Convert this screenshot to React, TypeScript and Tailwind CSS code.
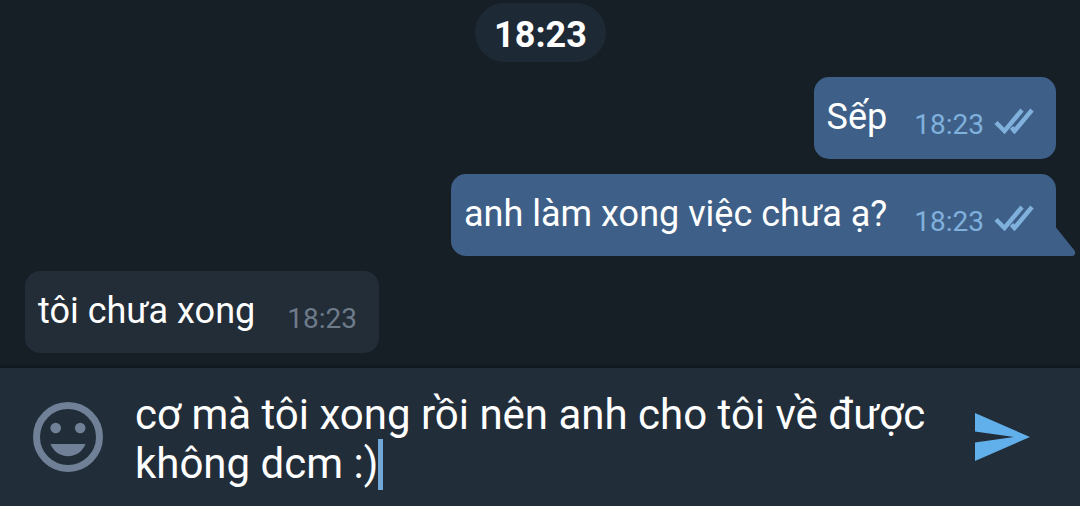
import React, { useState } from 'react';

interface Message {
  id: number;
  text: string;
  time: string;
  outgoing: boolean;
  tail?: boolean;
}

const initialMessages: Message[] = [
  { id: 1, text: 'Sếp', time: '18:23', outgoing: true },
  { id: 2, text: 'anh làm xong việc chưa ạ?', time: '18:23', outgoing: true, tail: true },
  { id: 3, text: 'tôi chưa xong', time: '18:23', outgoing: false },
];

const ReadIcon: React.FC = () => (
  <svg viewBox="0 0 40 26" className="w-10 h-[26px] mb-1.5" fill="none" stroke="currentColor" strokeWidth="4.4" aria-label="Đã xem">
    <path d="M2 14.5 10.500 23 28 2" />
    <path d="M17.500 19.5 20.500 23 38 2" />
  </svg>
);

const SmileIcon: React.FC = () => (
  <svg viewBox="0 0 70 70" className="w-[70px] h-[70px]" fill="currentColor" aria-hidden="true">
    <circle cx="35" cy="35" r="31.5" fill="none" stroke="currentColor" strokeWidth="7" />
    <circle cx="22.7" cy="26" r="5.3" />
    <circle cx="47.2" cy="26" r="5.3" />
    <path d="M17.5 42h35C49.5 49.500 43 54.200 35 54.200S20.500 49.500 17.500 42z" />
  </svg>
);

const SendIcon: React.FC = () => (
  <svg viewBox="0 0 56 48" className="w-14 h-12" fill="currentColor" aria-hidden="true">
    <path d="M0 0 55 24 0 48V29.500L39 24 0 18.500z" />
  </svg>
);

const Bubble: React.FC<{ message: Message }> = ({ message }) => {
  const { text, time, outgoing, tail } = message;
  return (
    <li
      className={
        'relative flex items-end pl-[13px] pr-[22px] pt-[17px] pb-[19px] rounded-[15px] ' +
        (outgoing ? 'self-end gap-[27px] bg-[#3e6088]' : 'self-start gap-8 bg-[#222d38]')
      }
    >
      <p className="text-[36px] leading-[46px] text-white">{text}</p>
      <div className={'flex shrink-0 items-end gap-[10px] ' + (outgoing ? 'text-[#80b0dc]' : 'text-[#6e7b8a]')}>
        <time className="text-[28px] leading-[30px]">{time}</time>
        {outgoing && <ReadIcon />}
      </div>
      {tail && (
        <svg viewBox="0 0 36 30" className="absolute bottom-0 -right-5 w-9 h-[30px]" fill="#3e6088" aria-hidden="true">
          <path d="M0 0H16V1.500L34.500 24.500C36 27 35 30 32 30H0z" />
        </svg>
      )}
    </li>
  );
};

const App: React.FC = () => {
  const [messages, setMessages] = useState(initialMessages);
  const [draft, setDraft] = useState('cơ mà tôi xong rồi nên anh cho tôi về được không dcm :)');

  const handleSend = (e: React.FormEvent) => {
    e.preventDefault();
    if (!draft.trim()) return;
    setMessages([...messages, { id: messages.length + 1, text: draft, time: '18:23', outgoing: true, tail: true }]);
    setDraft('');
  };

  return (
    <div className="min-h-screen flex flex-col bg-[#161e26] font-[Roboto,sans-serif]">
      <main className="flex-1 flex flex-col pt-[3px] pb-[14px] pl-[25px] pr-6">
        <h2 className="self-center px-[19px] pt-[5px] text-[36px] leading-[54px] font-bold text-white bg-[#1e2936] rounded-full">
          18:23
        </h2>
        <ul className="mt-[15px] flex flex-col gap-[15px]">
          {messages.map((message) => (
            <Bubble key={message.id} message={message} />
          ))}
        </ul>
      </main>

      <form
        onSubmit={handleSend}
        className="flex items-center bg-[#222d3a] pl-[33px] pr-[49px] py-[18px] shadow-[0_-2px_3px_#10161d]"
      >
        <button type="button" aria-label="Biểu tượng cảm xúc" className="shrink-0 text-[#6f8097]">
          <SmileIcon />
        </button>
        <div className="flex-1 min-w-0 ml-8 mr-[34px] pt-1 text-[42px] leading-[49px]">
          <div className="relative">
            <textarea
              aria-label="Tin nhắn"
              rows={2}
              value={draft}
              onChange={(e) => setDraft(e.target.value)}
              className="block w-full resize-none overflow-hidden bg-transparent text-white outline-none caret-transparent"
            />
            {/* wide caret, follows the end of the draft */}
            <div aria-hidden="true" className="absolute inset-0 whitespace-pre-wrap break-words pointer-events-none">
              <span className="invisible">{draft}</span>
              <span className="inline-block align-top w-[5px] h-[51px] bg-[#72a8d8]" />
            </div>
          </div>
        </div>
        <button type="submit" aria-label="Gửi" className="shrink-0 text-[#62b0eb]">
          <SendIcon />
        </button>
      </form>
    </div>
  );
};

export default App;
